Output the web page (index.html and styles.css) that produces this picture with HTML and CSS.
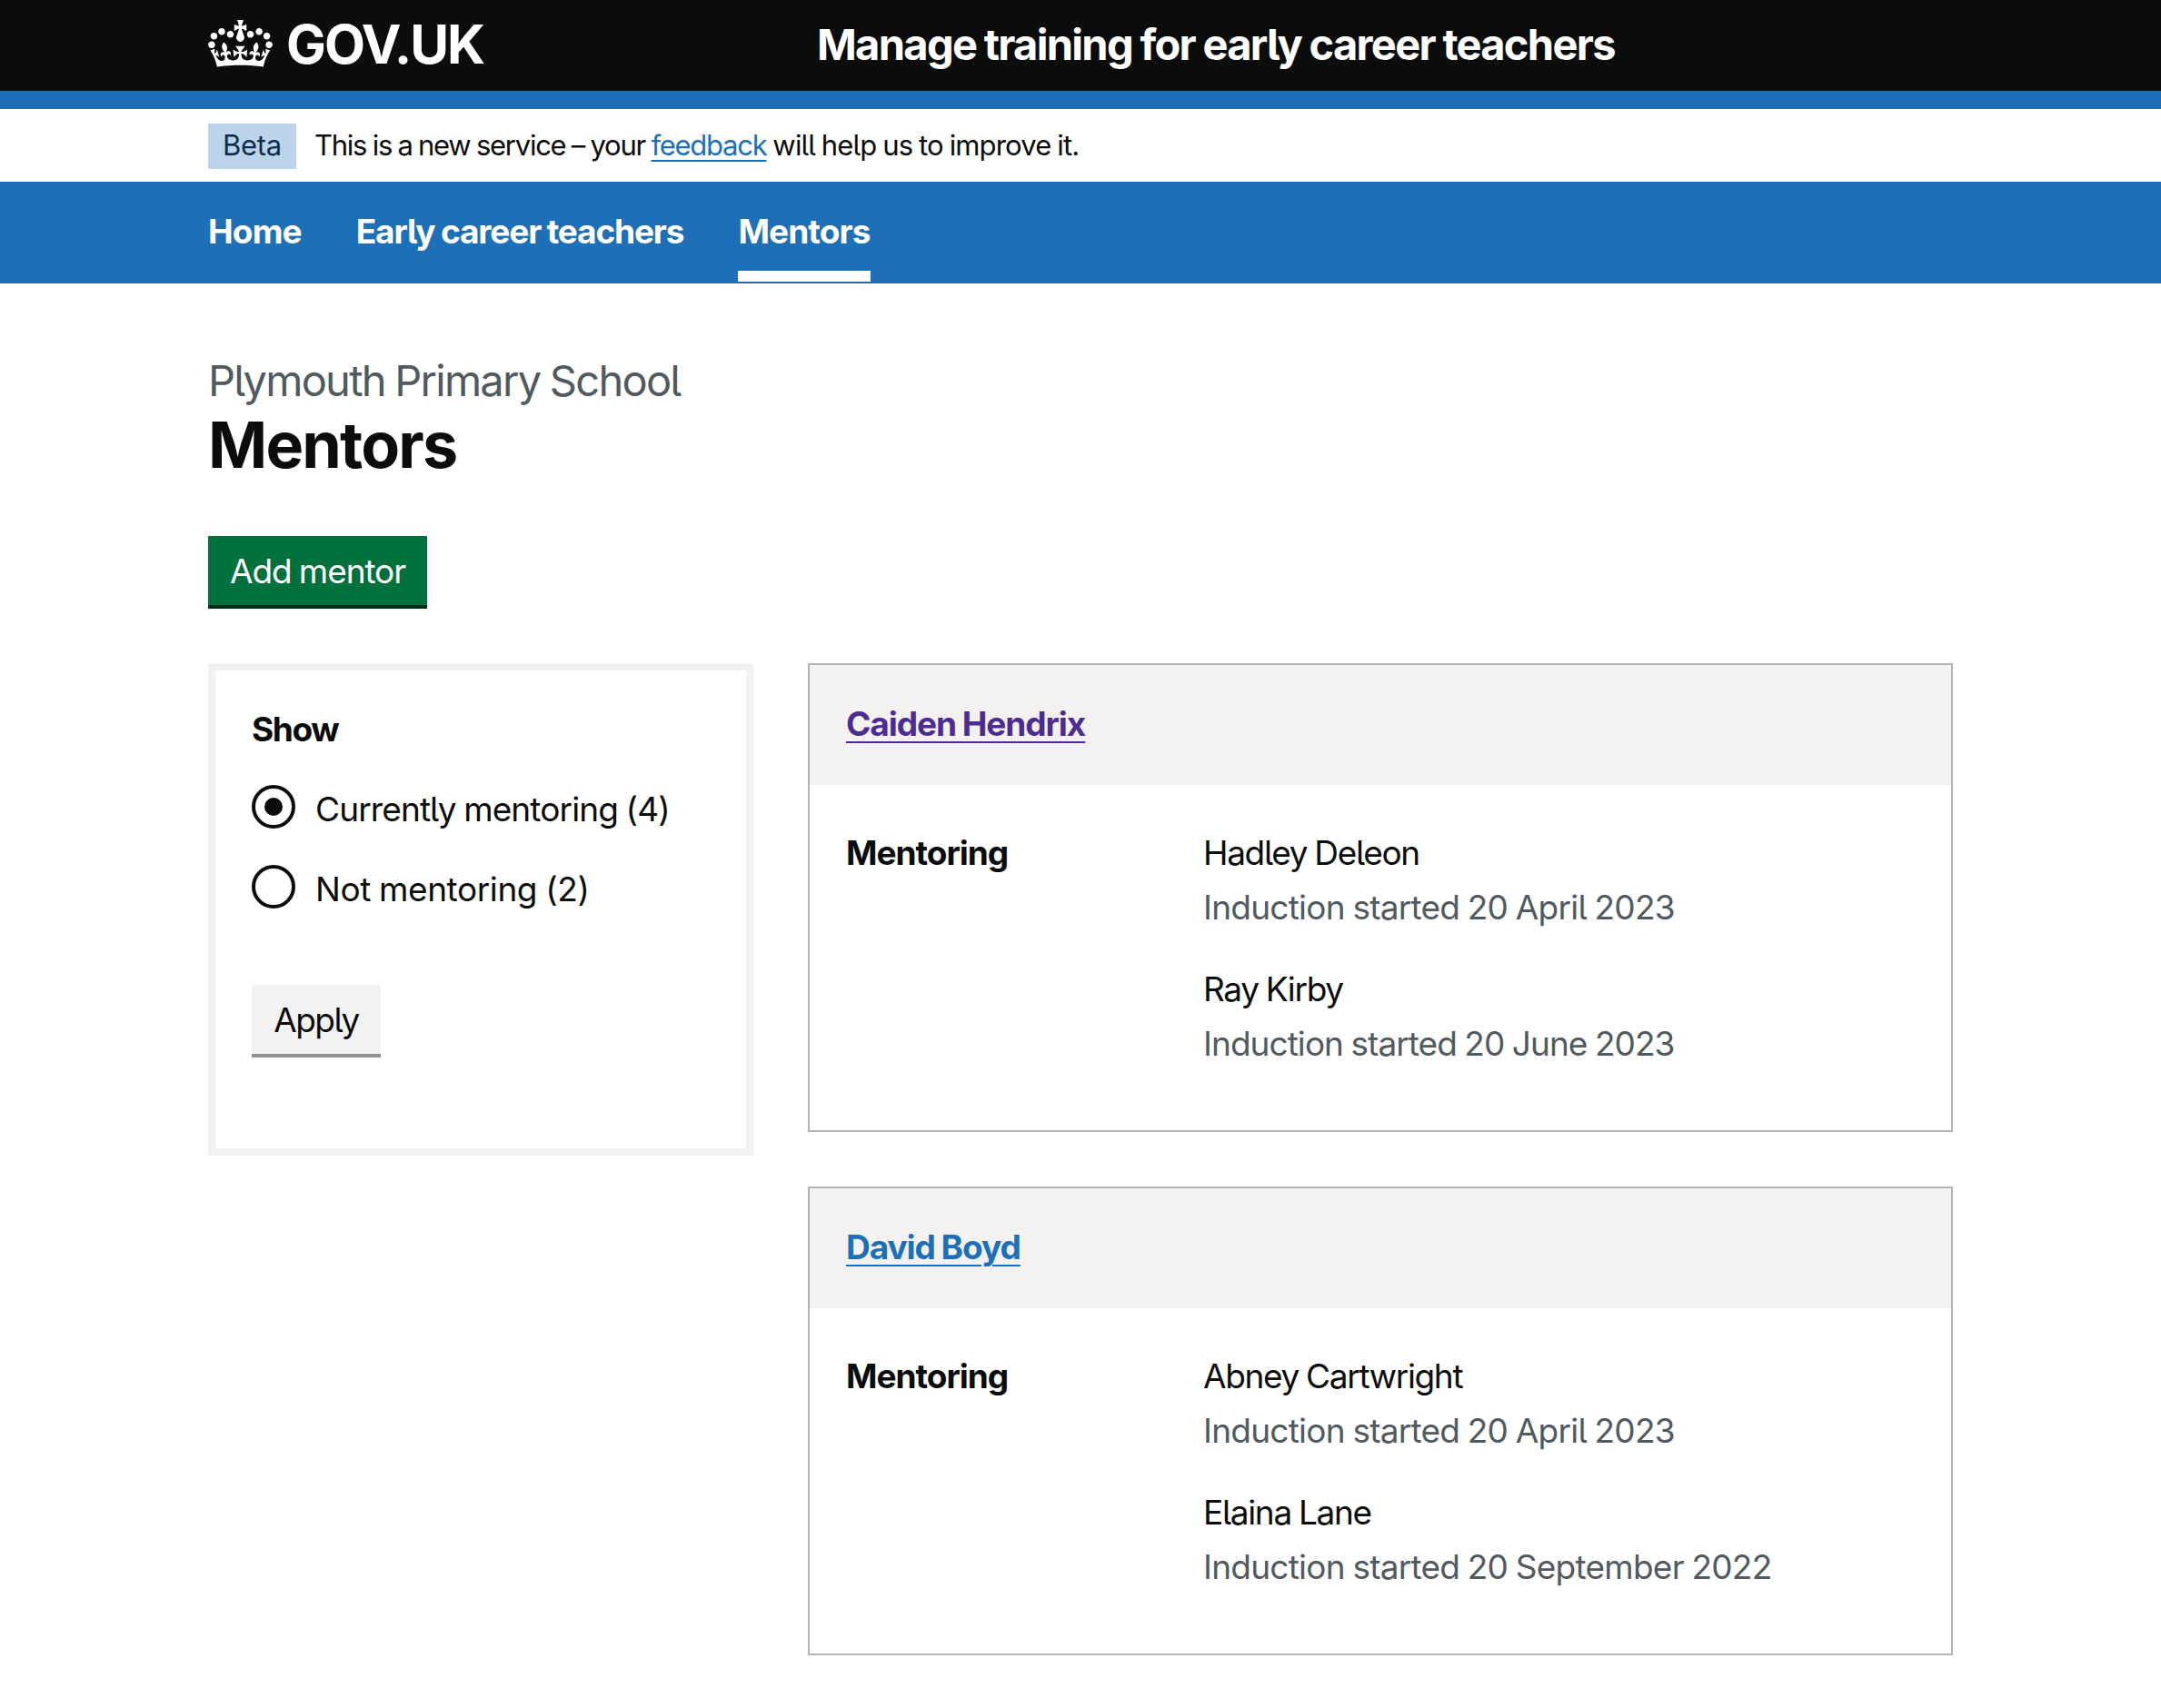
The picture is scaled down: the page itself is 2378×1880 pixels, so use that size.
FILE: index.html
```html
<!DOCTYPE html>
<html lang="en">
<head>
<meta charset="utf-8">
<title>Mentors - Manage training for early career teachers</title>
<link rel="stylesheet" href="styles.css">
</head>
<body>
<header class="header">
  <div class="container header-row">
    <a class="logo" href="#">
      <svg class="crown" viewBox="0 0 132 97" aria-hidden="true"><path fill="currentColor" fill-rule="evenodd" d="M25 30.2c3.5 1.5 7.7-.2 9.1-3.7 1.5-3.6-.2-7.8-3.9-9.2-3.6-1.4-7.6.3-9.1 3.9-1.4 3.5.3 7.5 3.9 9zM9 39.5c3.6 1.5 7.8-.2 9.2-3.7 1.5-3.6-.2-7.8-3.9-9.1-3.6-1.5-7.6.2-9.1 3.8-1.4 3.5.3 7.5 3.8 9zM4.4 57.2c3.5 1.5 7.7-.2 9.1-3.8 1.5-3.6-.2-7.7-3.9-9.1-3.5-1.5-7.6.3-9.1 3.8-1.4 3.5.3 7.6 3.9 9.1zm38.3-21.4c3.5 1.5 7.7-.2 9.1-3.8 1.5-3.6-.2-7.7-3.9-9.1-3.6-1.5-7.6.3-9.1 3.8-1.3 3.6.4 7.7 3.9 9.1zm64.4-5.6c-3.6 1.5-7.8-.2-9.1-3.7-1.5-3.6.2-7.8 3.8-9.2 3.6-1.4 7.7.3 9.2 3.9 1.3 3.5-.4 7.5-3.9 9zm15.9 9.3c-3.6 1.5-7.7-.2-9.1-3.7-1.5-3.6.2-7.8 3.7-9.1 3.6-1.5 7.7.2 9.2 3.8 1.5 3.5-.3 7.5-3.8 9zm4.7 17.7c-3.6 1.5-7.8-.2-9.2-3.8-1.5-3.6.2-7.7 3.9-9.1 3.6-1.5 7.7.3 9.2 3.8 1.3 3.5-.4 7.6-3.9 9.1zM89.3 35.8c-3.6 1.5-7.8-.2-9.2-3.8-1.4-3.6.2-7.7 3.9-9.1 3.6-1.5 7.7.3 9.2 3.8 1.4 3.6-.3 7.7-3.9 9.1zM69.7 17.7l8.9 4.7V9.3l-8.9 2.8c-.2-.3-.5-.6-.9-.9L72.4 0H59.6l3.5 11.2c-.3.3-.6.5-.9.9l-8.8-2.8v13.1l8.8-4.7c.3.3.6.7.9.9l-5 15.4v.1c-.2.8-.4 1.6-.4 2.4 0 4.1 3.1 7.5 7 8.1h.2c.3 0 .7.1 1 .1.4 0 .7 0 1-.1h.2c4-.6 7.1-4.1 7.1-8.1 0-.8-.1-1.7-.4-2.4V34l-5.1-15.4c.4-.2.7-.6 1-.9zM66 92.8c16.9 0 32.8 1.1 47.1 3.2 4-16.9 8.9-26.7 14-33.5l-9.6-3.4c1 4.9 1.1 7.2 0 10.2-1.5-1.4-3-4.3-4.2-8.7L108.6 76c2.8-2 5-3.2 7.5-3.3-4.4 9.4-10 11.9-13.6 11.2-4.3-.8-6.3-4.6-5.6-7.9 1-4.7 5.7-5.9 8-.5 4.3-8.7-3-11.4-7.6-8.8 7.1-7.2 7.9-13.5 2.1-21.1-8 6.1-8.1 12.3-4.5 20.8-4.7-5.4-12.1-2.5-9.5 6.2 3.4-5.2 7.9-2 7.2 3.1-.6 4.3-6.4 7.8-13.5 7.2-10.3-.9-10.9-8-11.2-13.8 2.5-.5 7.1 1.8 11 7.3L80.2 60c-4.1 4.4-8 5.3-12.3 5.4 1.4-4.4 8-11.6 8-11.6H55.5s6.4 7.2 7.9 11.6c-4.2-.1-8-1-12.3-5.4l1.4 16.4c3.9-5.5 8.5-7.7 10.9-7.3-.3 5.8-.9 12.8-11.1 13.8-7.2.6-12.9-2.9-13.5-7.2-.7-5 3.8-8.3 7.1-3.1 2.7-8.7-4.6-11.6-9.4-6.2 3.7-8.5 3.6-14.7-4.6-20.8-5.8 7.6-5 13.9 2.2 21.1-4.7-2.6-11.9.1-7.7 8.8 2.3-5.5 7.1-4.2 8.1.5.7 3.3-1.3 7.1-5.7 7.9-3.5.7-9-1.8-13.5-11.2 2.5.1 4.7 1.3 7.5 3.3l-4.7-15.4c-1.2 4.4-2.7 7.2-4.3 8.7-1.1-3-.9-5.3 0-10.2l-9.5 3.4c5 6.9 9.9 16.7 14 33.5 14.8-2.1 30.8-3.2 47.7-3.2z"/></svg>
      <span class="logo-text">GOV.UK</span>
    </a>
    <span class="service-name">Manage training for early career teachers</span>
  </div>
</header>
<div class="phase">
  <div class="container phase-row">
    <strong class="tag">Beta</strong>
    <span class="phase-text"><span class="phase-lead">This is a new service – your </span><a class="link" href="#">feedback</a> will help us to improve it.</span>
  </div>
</div>
<nav class="nav">
  <div class="container nav-row">
    <a class="nav-item" href="#">Home</a>
    <a class="nav-item nav-item-long" href="#">Early career teachers</a>
    <a class="nav-item nav-item-current" href="#">Mentors</a>
  </div>
</nav>
<main class="container main">
  <div class="caption">Plymouth Primary School</div>
  <h1 class="title">Mentors</h1>
  <button class="button button-add">Add mentor</button>
  <div class="columns">
    <form class="filter">
      <h2 class="filter-title">Show</h2>
      <div class="radios">
        <label class="radio"><span class="dial dial-on"></span><span class="radio-label">Currently mentoring (4)</span></label>
        <label class="radio"><span class="dial"></span><span class="radio-label radio-label-off">Not mentoring (2)</span></label>
      </div>
      <button class="button button-apply" type="button">Apply</button>
    </form>
    <div class="cards">
      <section class="card">
        <h2 class="card-head"><a class="link link-visited" href="#">Caiden Hendrix</a></h2>
        <div class="card-body">
          <div class="key">Mentoring</div>
          <div class="values">
            <div><div class="person">Hadley Deleon</div><div class="hint">Induction started 20 April 2023</div></div>
            <div><div class="person">Ray Kirby</div><div class="hint hint-tight">Induction started 20 June 2023</div></div>
          </div>
        </div>
      </section>
      <section class="card">
        <h2 class="card-head"><a class="link" href="#">David Boyd</a></h2>
        <div class="card-body">
          <div class="key">Mentoring</div>
          <div class="values">
            <div><div class="person">Abney Cartwright</div><div class="hint">Induction started 20 April 2023</div></div>
            <div><div class="person">Elaina Lane</div><div class="hint">Induction started 20 September 2022</div></div>
          </div>
        </div>
      </section>
    </div>
  </div>
</main>
</body>
</html>
```
FILE: styles.css
```css
* { box-sizing: border-box; }
body {
  margin: 0;
  background: #fff;
  color: #0b0c0c;
  font: 400 37px/60px Inter, "Noto Sans", sans-serif;
  font-feature-settings: "cv05";
  letter-spacing: -0.88px;
  word-spacing: -1px;
}
h1, h2 { margin: 0; font-size: inherit; }
.container { width: 1920px; margin: 0 auto; }

.header { background: #0b0c0c; color: #fff; border-bottom: 20px solid #1d70b8; }
.header-row { display: flex; height: 100px; }
.logo { display: flex; gap: 15px; width: 670px; padding-top: 22px; color: #fff; text-decoration: none; }
.crown { width: 71px; height: 52px; }
.logo-text { font-size: 58.5px; font-weight: 700; line-height: 54px; letter-spacing: -2px; }
.service-name { font-size: 47px; font-weight: 700; line-height: 98px; letter-spacing: -1.68px; }

.phase-row { display: flex; gap: 20px; height: 80px; padding-top: 16px; font-size: 31px; line-height: 48px; }
.tag { width: 97px; height: 50px; background: #bbd4ea; color: #0c2d4a; font-weight: 400; text-align: center; letter-spacing: -0.3px; }
.phase-text { letter-spacing: -0.85px; }
.phase-lead { letter-spacing: -1.26px; }
.phase-text .link { text-underline-offset: 5px; letter-spacing: -1.25px; }

.link { color: #1d70b8; text-decoration: underline 2px; text-underline-offset: 6px; }
.link-visited { color: #4c2c92; }

.nav { background: #1d70b8; }
.nav-row { display: flex; gap: 60px; height: 112px; font-weight: 700; line-height: 87px; letter-spacing: -0.85px; }
.nav-item { height: 110px; padding-top: 11px; color: #fff; text-decoration: none; }
.nav-item-long { letter-spacing: -1.13px; }
.nav-item-current { border-bottom: 12px solid #fff; }

.main { padding-top: 77px; }
.caption { color: #505a5f; font-size: 47px; letter-spacing: -1.74px; }
.title { font-size: 70px; line-height: 81px; letter-spacing: -1.8px; }

.button { display: block; height: 80px; padding: 1px 0 0; border: 0; border-bottom: 4px solid; font: inherit; line-height: 75px; word-spacing: inherit; text-align: center; }
.button-add { width: 241px; margin-top: 60px; background: #00703c; border-color: #002d18; color: #fff; letter-spacing: -1.1px; }
.button-apply { width: 142px; margin-top: 84px; background: #f3f2f1; border-color: #929191; color: #0b0c0c; letter-spacing: -1.5px; }

.columns { display: flex; align-items: flex-start; gap: 60px; margin-top: 60px; }
.filter { width: 600px; padding: 35px 40px 100px; border: 8px solid #f3f2f1; }
.filter-title { letter-spacing: -1.4px; }
.radios { display: flex; flex-direction: column; gap: 40px; margin-top: 31px; }
.radio { display: flex; gap: 22px; height: 48px; }
.radio-label { padding-top: 2px; line-height: 49px; }
.radio-label-off { letter-spacing: -0.4px; }
.dial { display: flex; width: 48px; height: 48px; border: 4px solid #0b0c0c; border-radius: 50%; }
.dial-on::before { content: ""; width: 20px; height: 20px; margin: auto; border-radius: 50%; background: #0b0c0c; }

.cards { display: flex; flex: 1; flex-direction: column; gap: 60px; }
.card { height: 516px; border: 2px solid #b1b4b6; }
.card-head { height: 132px; padding: 35px 40px 0; background: #f3f2f1; letter-spacing: -1.05px; }
.card-body { display: flex; padding: 45px 40px 0; }
.key { width: 393px; font-weight: 700; letter-spacing: -1px; }
.values { display: flex; flex-direction: column; gap: 30px; }
.person { letter-spacing: -1.33px; }
.hint { color: #505a5f; letter-spacing: -0.76px; }
.hint-tight { letter-spacing: -0.95px; }
```
